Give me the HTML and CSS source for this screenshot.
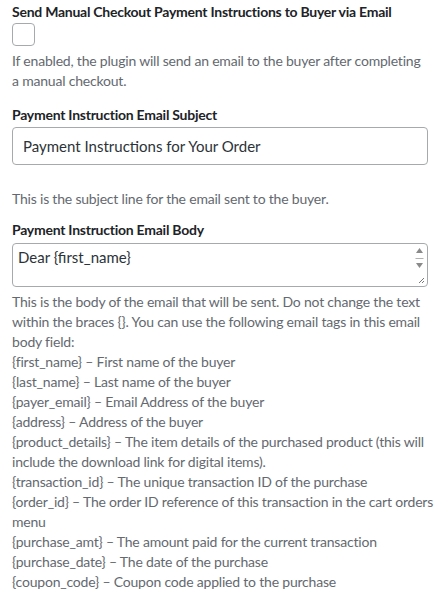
FILE: index.html
```html
<!DOCTYPE html>
<html>
<head>
<meta charset="utf-8">
<link rel="stylesheet" href="styles.css">
</head>
<body>
<div class="settings">
  <div class="field">
    <div class="field-title">Send Manual Checkout Payment Instructions to Buyer via Email</div>
    <input type="checkbox" class="check">
    <p class="desc desc-check">If enabled, the plugin will send an email to the buyer after completing a manual checkout.</p>
  </div>
  <div class="field">
    <div class="field-title">Payment Instruction Email Subject</div>
    <input type="text" class="text-input" value="Payment Instructions for Your Order">
    <p class="desc desc-subject">This is the subject line for the email sent to the buyer.</p>
  </div>
  <div class="field">
    <div class="field-title">Payment Instruction Email Body</div>
    <div class="textarea-wrap">
      <textarea class="textarea">Dear {first_name}</textarea>
      <div class="scrollbar">
        <svg width="9" height="30" viewBox="0 0 9 30"><path d="M4.5 1 L8 6 L1 6 Z" fill="#8a8a8a"/><rect x="0.5" y="11" width="8" height="1" fill="#b0b0b0"/><path d="M1 16 L8 16 L4.5 21 Z" fill="#8a8a8a"/></svg>
        <svg class="grip" width="8" height="8" viewBox="0 0 8 8"><path d="M7 2 L2 7 M7 5 L5 7" stroke="#777" stroke-width="1"/></svg>
      </div>
    </div>
    <p class="desc desc-body">This is the body of the email that will be sent. Do not change the text within the braces {}. You can use the following email tags in this email body field:<br>
    {first_name} – First name of the buyer<br>
    {last_name} – Last name of the buyer<br>
    {payer_email} – Email Address of the buyer<br>
    {address} – Address of the buyer<br>
    {product_details} – The item details of the purchased product (this will include the download link for digital items).<br>
    {transaction_id} – The unique transaction ID of the purchase<br>
    {order_id} – The order ID reference of this transaction in the cart orders menu<br>
    {purchase_amt} – The amount paid for the current transaction<br>
    {purchase_date} – The date of the purchase<br>
    {coupon_code} – Coupon code applied to the purchase</p>
  </div>
</div>
</body>
</html>
```

FILE: styles.css
```css
html, body {
  margin: 0;
  padding: 0;
  background: #ffffff;
}
body {
  font-family: Lato, "Open Sans", sans-serif;
  font-size: 14px;
  color: #1d2327;
}
.settings {
  padding: 2px 7px 0 12px;
}
.field-title {
  font-weight: 700;
  font-size: 14px;
  letter-spacing: -0.25px;
  line-height: 20px;
  color: #1d2327;
}
.check {
  -webkit-appearance: none;
  appearance: none;
  display: block;
  width: 23px;
  height: 23px;
  margin: 1px 0 0 0;
  border: 1px solid #a7aaad;
  border-radius: 4px;
  background: #fff;
  box-sizing: border-box;
}
.desc {
  margin: 0;
  font-size: 14px;
  letter-spacing: -0.2px;
  line-height: 20px;
  color: #646970;
}
.desc-check {
  margin: 5px 0 14px 0;
}
.desc-subject {
  margin: 24px 0 11px 0;
}
.desc-body {
  margin: 5px -6px 0 0;
}
.text-input {
  display: block;
  box-sizing: border-box;
  width: 100%;
  height: 38px;
  margin-top: 2px;
  padding: 0 10px;
  border: 1px solid #a7aaad;
  border-radius: 4px;
  font-family: inherit;
  font-size: 15px;
  color: #2c3338;
  background: #fff;
}
.textarea-wrap {
  position: relative;
  margin-top: 3px;
  height: 44px;
  box-sizing: border-box;
  border: 1px solid #a7aaad;
  border-radius: 4px;
  display: flex;
}
.textarea {
  flex: 1;
  border: none;
  resize: none;
  outline: none;
  padding: 2px 5px;
  font-family: inherit;
  font-size: 15px;
  line-height: 22px;
  color: #2c3338;
  background: transparent;
  overflow: hidden;
}
.scrollbar {
  width: 15px;
  display: flex;
  flex-direction: column;
  align-items: center;
  padding-top: 3px;
  position: relative;
}
.grip {
  position: absolute;
  right: 2px;
  bottom: 2px;
}
```
